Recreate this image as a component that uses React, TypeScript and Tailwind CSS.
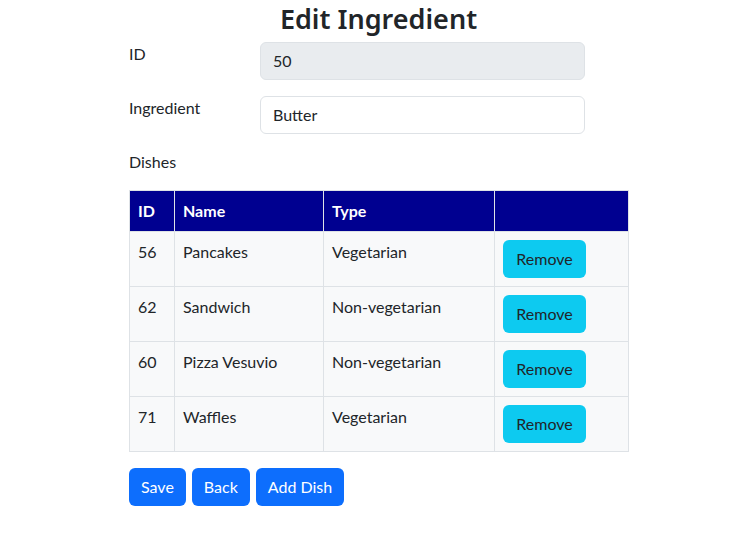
const dishes = [
  { id: 56, name: 'Pancakes', type: 'Vegetarian' },
  { id: 62, name: 'Sandwich', type: 'Non-vegetarian' },
  { id: 60, name: 'Pizza Vesuvio', type: 'Non-vegetarian' },
  { id: 71, name: 'Waffles', type: 'Vegetarian' },
];

export default function App() {
  return (
    <div
      className="min-h-[552px] w-[753px] bg-white text-[#212529] text-base leading-6"
      style={{ fontFamily: '"Segoe UI", Lato, "Liberation Sans", sans-serif' }}
    >
      <div className="ml-[129px] w-[499px] pt-[2px]">
        <h2
          className="text-center text-[27px] leading-[34px] font-semibold mb-[6px]"
          style={{ fontFamily: '"Segoe UI", "Noto Sans", sans-serif' }}
        >
          Edit Ingredient
        </h2>

        {/* ID */}
        <div className="flex mb-4">
          <label className="w-[131px]">ID</label>
          <input
            readOnly
            value="50"
            className="w-[325px] h-[38px] px-3 pb-[2px] rounded-md border border-[#dee2e6] bg-[#e9ecef] outline-none"
          />
        </div>

        {/* Ingredient */}
        <div className="flex mb-4">
          <label className="w-[131px]">Ingredient</label>
          <input
            defaultValue="Butter"
            className="w-[325px] h-[38px] px-3 pb-[2px] rounded-md border border-[#dee2e6] bg-white outline-none"
          />
        </div>

        <div className="mb-[16px]">Dishes</div>

        <table className="w-[500px] border-collapse">
          <thead>
            <tr className="bg-[#000090] text-white font-bold">
              <th className="w-[45px] border border-[#dee2e6] px-2 py-2 text-left">ID</th>
              <th className="w-[149px] border border-[#dee2e6] px-2 py-2 text-left">Name</th>
              <th className="w-[171px] border border-[#dee2e6] px-2 py-2 text-left">Type</th>
              <th className="border border-[#dee2e6] px-2 py-2"></th>
            </tr>
          </thead>
          <tbody>
            {dishes.map((d) => (
              <tr key={d.id} className="bg-[#f8f9fa]">
                <td className="border border-[#dee2e6] px-2 pt-2 align-top">{d.id}</td>
                <td className="border border-[#dee2e6] px-2 pt-2 align-top">{d.name}</td>
                <td className="border border-[#dee2e6] px-2 pt-2 align-top">{d.type}</td>
                <td className="border border-[#dee2e6] px-2 py-2 align-top">
                  <button className="block h-[38px] w-[83px] rounded-md bg-[#0dcaf0] text-[#212529] px-3">Remove</button>
                </td>
              </tr>
            ))}
          </tbody>
        </table>

        <div className="flex gap-[6px] mt-4">
          <button className="h-[38px] px-3 rounded-md bg-[#0d6efd] text-white">Save</button>
          <button className="h-[38px] px-3 rounded-md bg-[#0d6efd] text-white">Back</button>
          <button className="h-[38px] px-3 rounded-md bg-[#0d6efd] text-white">Add Dish</button>
        </div>
      </div>
    </div>
  );
}
